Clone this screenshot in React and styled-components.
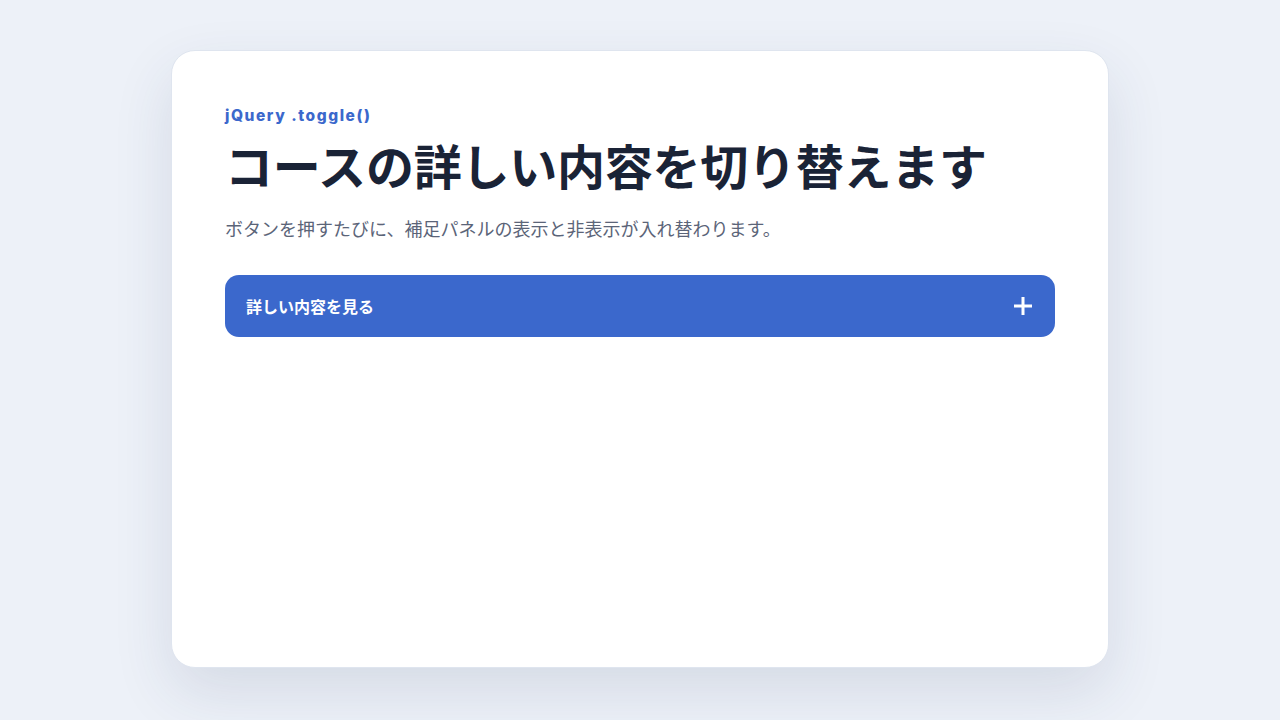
import React, { useState } from "react";
import styled, { createGlobalStyle } from "styled-components";

const GlobalStyle = createGlobalStyle`
  html, body {
    margin: 0;
    padding: 0;
    background: #edf1f8;
    font-family: "Inter", "Noto Sans CJK JP", sans-serif;
  }
`;

export default function App() {
  const [open, setOpen] = useState(false);

  return (
    <>
      <GlobalStyle />
      <Page>
        <Card>
          <Eyebrow>jQuery .toggle()</Eyebrow>
          <Title>コースの詳しい内容を切り替えます</Title>
          <Lead>ボタンを押すたびに、補足パネルの表示と非表示が入れ替わります。</Lead>
          <ToggleButton onClick={() => setOpen(!open)}>
            <span>{open ? "詳しい内容を閉じる" : "詳しい内容を見る"}</span>
            <PlusIcon open={open} />
          </ToggleButton>
          {open && (
            <Panel>
              このコースでは、基本的な操作から応用までを順番に学びます。
            </Panel>
          )}
        </Card>
      </Page>
    </>
  );
}

const PlusIcon = ({ open }) => (
  <svg width="20" height="20" viewBox="0 0 20 20" fill="none">
    <path
      d={open ? "M1 10h18" : "M10 1v18M1 10h18"}
      stroke="white"
      strokeWidth="3"
    />
  </svg>
);

const Page = styled.div`
  width: 1280px;
  height: 720px;
  box-sizing: border-box;
  padding-top: 50px;
  display: flex;
  justify-content: center;
  align-items: flex-start;
`;

const Card = styled.div`
  width: 938px;
  height: 618px;
  box-sizing: border-box;
  padding: 56px 53px;
  background: #ffffff;
  border: 1px solid #dfe5ef;
  border-radius: 24px;
  box-shadow: 0 24px 60px rgba(40, 60, 100, 0.12);
  display: flex;
  flex-direction: column;
`;

const Eyebrow = styled.div`
  font-size: 15.5px;
  line-height: 18px;
  font-weight: 800;
  letter-spacing: 0.1em;
  color: #3b68cc;
`;

const Title = styled.h1`
  margin: 14px 0 0;
  font-size: 48px;
  line-height: 58px;
  font-weight: 700;
  letter-spacing: -0.005em;
  color: #1a2336;
`;

const Lead = styled.p`
  margin: 19px 0 0;
  font-size: 18px;
  line-height: 28px;
  color: #5b6478;
`;

const ToggleButton = styled.button`
  margin-top: 31px;
  height: 62px;
  width: 100%;
  box-sizing: border-box;
  padding: 0 22px 0 21px;
  border: none;
  border-radius: 14px;
  background: #3b68cc;
  color: #ffffff;
  font-family: inherit;
  font-size: 16px;
  font-weight: 700;
  display: flex;
  align-items: center;
  justify-content: space-between;
  cursor: pointer;
`;

const Panel = styled.div`
  margin-top: 16px;
  padding: 20px 22px;
  border-radius: 14px;
  background: #f3f6fc;
  color: #3a4356;
  font-size: 16px;
  line-height: 1.7;
`;
